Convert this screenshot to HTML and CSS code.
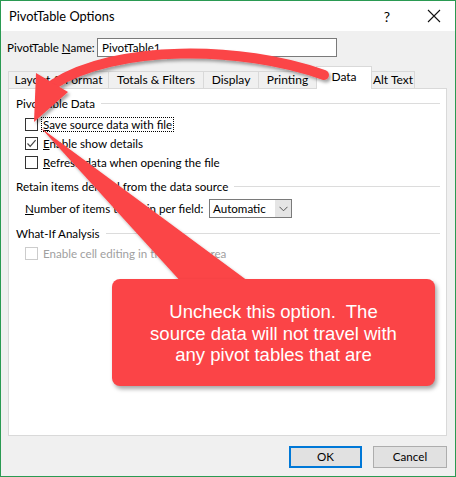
FILE: index.html
```
<!DOCTYPE html>
<html>
<head>
<meta charset="utf-8">
<link rel="stylesheet" href="styles.css">
</head>
<body>
<div class="window">
  <div class="titlebar">
    <span class="title">PivotTable Options</span>
    <span class="help">?</span>
    <svg class="close" width="14" height="14" viewBox="0 0 14 14"><path d="M1 1 L13 13 M13 1 L1 13" stroke="#111" stroke-width="1.1" fill="none"/></svg>
  </div>
  <div class="body">
    <div class="name-row">
      <span class="name-label">PivotTable <u>N</u>ame:</span>
      <div class="input">PivotTable1</div>
    </div>
    <div class="tabs">
      <div class="tab t1">Layout &amp; Format</div>
      <div class="tab t2">Totals &amp; Filters</div>
      <div class="tab t3">Display</div>
      <div class="tab t4">Printing</div>
      <div class="tab active t5">Data</div>
      <div class="tab t6">Alt Text</div>
    </div>
    <div class="panel">
      <div class="group-head g1"><span>PivotTable Data</span></div>
      <div class="row r1">
        <span class="cb"></span>
        <span class="lbl focus"><u>S</u>ave source data with file</span>
      </div>
      <div class="row">
        <span class="cb"><svg width="11" height="11" viewBox="0 0 11 11"><path d="M1.5 5.5 L4.2 8.3 L9.6 2.2" stroke="#444" stroke-width="1.2" fill="none"/></svg></span>
        <span class="lbl"><u>E</u>nable show details</span>
      </div>
      <div class="row">
        <span class="cb"></span>
        <span class="lbl"><u>R</u>efresh data when opening the file</span>
      </div>
      <div class="group-head g2"><span>Retain items deleted from the data source</span></div>
      <div class="row num-row">
        <span class="num-label"><u>N</u>umber of items to retain per field:</span>
        <div class="select"><span class="sel-text">Automatic</span><span class="sel-btn"><svg width="9" height="6" viewBox="0 0 9 6"><path d="M0.5 0.8 L4.5 4.8 L8.5 0.8" stroke="#555" stroke-width="1" fill="none"/></svg></span></div>
      </div>
      <div class="group-head g3"><span>What-If Analysis</span></div>
      <div class="row disabled">
        <span class="cb"></span>
        <span class="lbl">Enable cell editing in the values area</span>
      </div>
    </div>
    <div class="buttons">
      <div class="btn ok">OK</div>
      <div class="btn">Cancel</div>
    </div>
  </div>
  <svg class="overlay" width="456" height="477" viewBox="0 0 456 477">
    <defs>
      <filter id="sh" x="-10%" y="-10%" width="130%" height="130%">
        <feDropShadow dx="2" dy="2.5" stdDeviation="1.8" flood-color="#000" flood-opacity="0.35"/>
      </filter>
    </defs>
    <g filter="url(#sh)">
      <path d="M324 75 C240 45, 115 45, 54 84" stroke="#fb4447" stroke-width="10" stroke-linecap="round" fill="none"/>
      <polygon points="36,73 68,92 34,122" fill="#fb4447"/>
      <polygon points="41,128 183,284 252,284" fill="#fb4447"/>
    </g>
  </svg>
  <div class="callout">Uncheck this option.&nbsp; The<br>source data will not travel with<br>any pivot tables that are</div>
</div>
</body>
</html>
```
FILE: styles.css
```
* { box-sizing: border-box; }
html, body { margin: 0; padding: 0; background: #fff; }
.window {
  position: relative;
  width: 456px;
  height: 477px;
  border: 1px solid #2a9a52;
  font-family: Lato, "Noto Sans", sans-serif;
  font-size: 11.6px;
  color: #000;
  background: #f0f0f0;
  overflow: hidden;
  white-space: nowrap;
}
.titlebar {
  height: 30px;
  background: #fff;
  display: flex;
  align-items: center;
  padding-left: 8px;
}
.title { font-size: 12.8px; flex: 1; padding-bottom: 1px; }
.help { font-size: 14px; margin-right: 37px; }
.close { margin-right: 14px; }
.body { padding: 7px 8px 0 6px; }
.name-row { display: flex; align-items: center; height: 19px; }
.name-label { width: 90px; flex-shrink: 0; }
.input {
  width: 240px;
  height: 19px;
  border: 1px solid #7a7a7a;
  background: #fff;
  padding-left: 4px;
  line-height: 17px;
}
.tabs {
  display: flex;
  align-items: flex-end;
  height: 22px;
  margin-top: 9px;
  margin-left: 1px;
  position: relative;
  z-index: 2;
}
.tab {
  height: 17px;
  border: 1px solid #d9d9d9;
  border-bottom: none;
  border-right: none;
  background: #f0f0f0;
  text-align: center;
  line-height: 15px;
  font-size: 12px;
  flex-shrink: 0;
}
.t1 { width: 100px; }
.t2 { width: 95px; }
.t3 { width: 55px; }
.t4 { width: 58px; }
.t5 { width: 56px; }
.t6 { width: 43px; border-right: 1px solid #d9d9d9; }
.tab.active {
  height: 23px;
  background: #fff;
  border-right: 1px solid #d9d9d9;
  margin-bottom: -1px;
  line-height: 20px;
}
.tab.active + .tab { border-left: none; }
.panel {
  width: 439px;
  height: 348px;
  margin-left: 1px;
  border: 1px solid #d9d9d9;
  background: #fff;
  padding: 6px 6px 0 7px;
  position: relative;
  z-index: 1;
}
.group-head {
  display: flex;
  align-items: center;
  height: 16px;
}
.group-head::after {
  content: "";
  flex: 1;
  height: 1px;
  background: #dcdcdc;
  margin-left: 6px;
}
.g2 { margin-top: 6px; }
.g3 { margin-top: 7px; }
.row {
  display: flex;
  align-items: center;
  height: 19px;
  padding-left: 9px;
}
.r1 { margin-top: 4px; }
.cb {
  width: 13px;
  height: 13px;
  border: 1px solid #333;
  background: #fff;
  display: flex;
  align-items: center;
  justify-content: center;
  margin-right: 3px;
  flex-shrink: 0;
}
.lbl {
  border: 1px dotted transparent;
  padding: 0 1px;
  line-height: 13px;
}
.lbl.focus { border-color: #000; }
.num-row { margin-top: 5px; }
.num-label { width: 184px; flex-shrink: 0; }
.select {
  width: 83px;
  height: 19px;
  border: 1px solid #7a7a7a;
  display: flex;
  align-items: center;
  flex-shrink: 0;
}
.sel-text { flex: 1; padding-left: 3px; }
.sel-btn {
  width: 16px;
  height: 17px;
  background: #e5e5e5;
  display: flex;
  align-items: center;
  justify-content: center;
}
.disabled { margin-top: 3px; color: #a0a0a0; }
.disabled .cb { border-color: #cccccc; }
.buttons {
  display: flex;
  justify-content: flex-end;
  gap: 11px;
  margin-top: 10px;
}
.btn {
  width: 74px;
  height: 22px;
  border: 1px solid #adadad;
  background: #e1e1e1;
  text-align: center;
  line-height: 20px;
}
.btn.ok { width: 73px; border: 2px solid #0078d7; line-height: 18px; }
.overlay { position: absolute; left: -1px; top: -1px; z-index: 5; pointer-events: none; }
.callout {
  position: absolute;
  left: 111px;
  top: 278px;
  width: 323px;
  height: 107px;
  border-radius: 8px;
  background: #fb4447;
  box-shadow: 2px 3px 4px rgba(0, 0, 0, 0.35);
  color: #fff;
  font-family: "Liberation Sans", Arial, sans-serif;
  font-size: 18.5px;
  line-height: 21.5px;
  text-align: center;
  padding-top: 22px;
  z-index: 6;
  white-space: normal;
}
```
